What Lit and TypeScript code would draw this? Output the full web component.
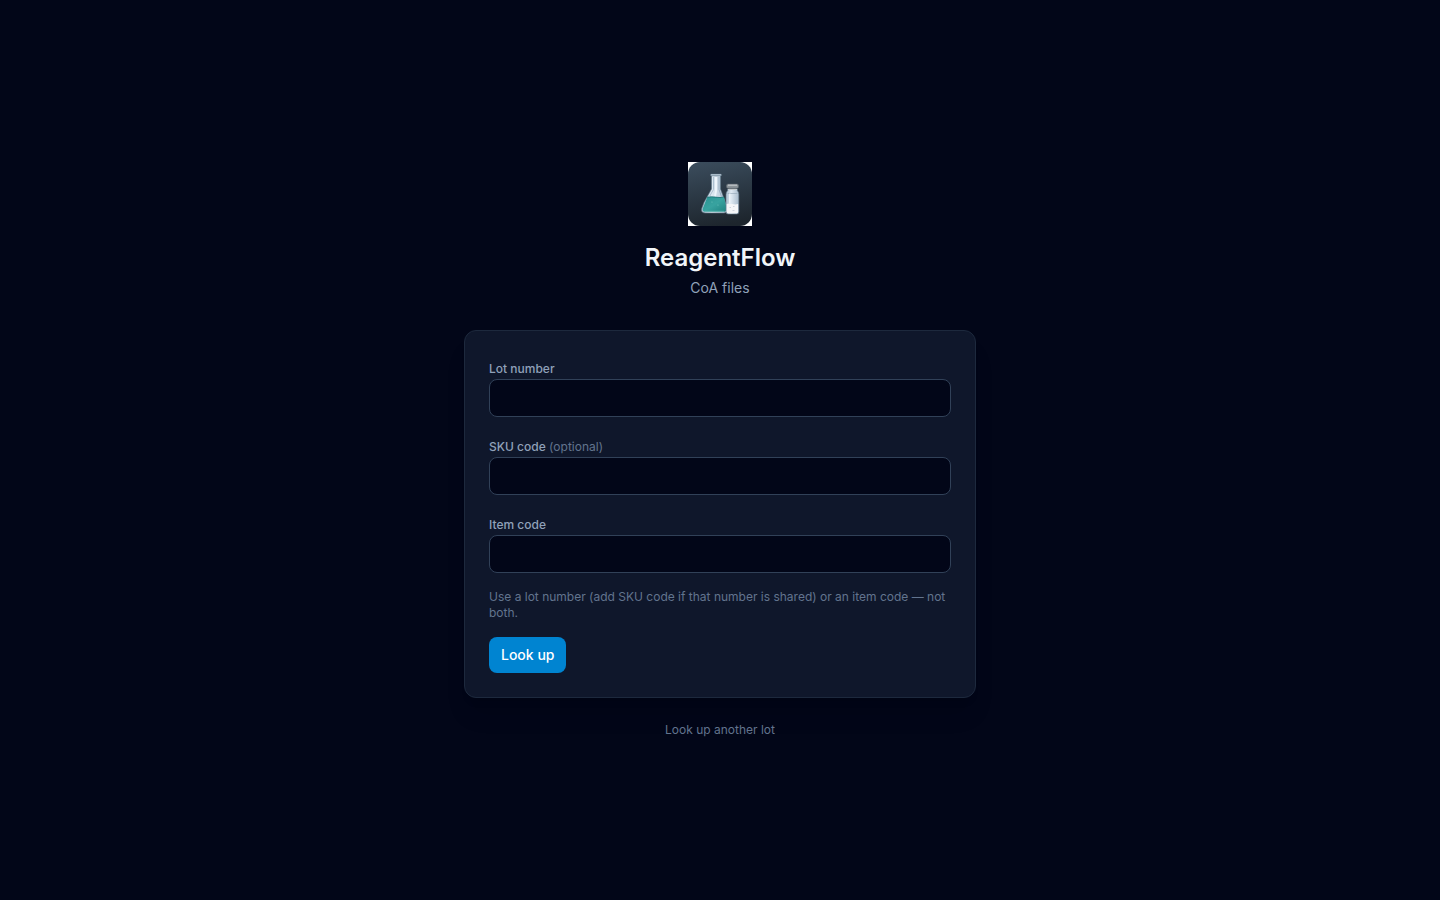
import { LitElement, html, css, svg, nothing } from "lit";
import { customElement } from "lit/decorators.js";

const logo = svg`
  <svg class="logo" viewBox="0 0 64 64" role="img" aria-label="ReagentFlow logo">
    <defs>
      <linearGradient id="tile" x1="0.3" y1="0" x2="0.5" y2="1">
        <stop offset="0" stop-color="#3a4b5b" />
        <stop offset="0.5" stop-color="#2b3844" />
        <stop offset="1" stop-color="#1d252d" />
      </linearGradient>
      <linearGradient id="glass" x1="0" y1="0" x2="1" y2="0">
        <stop offset="0" stop-color="#a9bccd" />
        <stop offset="0.4" stop-color="#dfe9f2" />
        <stop offset="1" stop-color="#a9bccd" />
      </linearGradient>
      <linearGradient id="liquid" x1="0" y1="0" x2="1" y2="1">
        <stop offset="0" stop-color="#2a9291" />
        <stop offset="0.5" stop-color="#38a3a0" />
        <stop offset="1" stop-color="#1f8381" />
      </linearGradient>
    </defs>
    <rect width="64" height="64" fill="#fff" />
    <rect width="64" height="64" rx="12" fill="url(#tile)" />
    <path d="M23.500 13.500h9v13.500l5.700 15.500 1 4q.8 4-3.200 4.500H17q-4.500-.5-3.300-4.500l2.300-6L23.500 27z" fill="url(#glass)" stroke="#5d7485" stroke-width=".6" />
    <path d="M19.300 35q4-.5 8.500 0t8.200 0l2 8 .5 3.500q.3 3-2.500 3.300H17q-3-.3-2.200-3.300z" fill="url(#liquid)" />
    <path d="M19.300 35.200q4-.8 8.500 0t8-.2" fill="none" stroke="#156f72" stroke-width=".8" />
    <path d="M17 49.300h19" stroke="#68bbb8" stroke-width=".8" />
    <path d="M25.500 15v12.500l-4 7" fill="none" stroke="#a1b6c8" stroke-width=".8" />
    <path d="M28 15v14l-1 5" fill="none" stroke="#eef5fb" stroke-width="2" />
    <path d="M31 15v12.500l2.500 7" fill="none" stroke="#8fa8bc" stroke-width=".8" />
    <circle cx="24" cy="40" r=".6" fill="#6fc2bd" />
    <circle cx="30" cy="43" r=".6" fill="#6fc2bd" />
    <rect x="22.500" y="12" width="11" height="1.800" rx=".9" fill="#c9d8e4" stroke="#526b7d" stroke-width=".5" />
    <path d="M39.700 27v1.500q-1.700 1.500-1.700 4V49.500q0 2.500 2 2.500h8.800q2 0 2-2.500v-17q0-2.500-1.500-4V27z" fill="url(#glass)" stroke="#657b8c" stroke-width=".6" />
    <path d="M38.700 42q2.500-.8 5.500 0t5.900 0V49.800q0 1.500-1.500 1.500h-8.400q-1.500 0-1.500-1.500z" fill="#f5f6f8" />
    <path d="M39.700 31.500h9.600" stroke="#8fa3b3" stroke-width=".6" />
    <path d="M41.800 31.500v10" stroke="#f2f8fd" stroke-width="1.300" />
    <path d="M41.500 45.500h1.500M45 44.500h1.500M44.500 48.500h2" stroke="#c5ccd5" stroke-width=".8" />
    <path d="M40.500 25h8v3h-8z" fill="#6c757c" />
    <rect x="38.500" y="22" width="12" height="4.300" rx="1.500" fill="#8b9398" stroke="#596269" stroke-width=".5" />
    <path d="M40 23.200h9M40 27.500h9" stroke="#cfd4d6" stroke-width=".9" />
  </svg>`;

const fields = [
  { id: "lot", label: "Lot number", optional: false },
  { id: "sku", label: "SKU code", optional: true },
  { id: "item", label: "Item code", optional: false },
];

@customElement("app-root")
export class AppRoot extends LitElement {
  static styles = css`
    :host {
      display: flex;
      flex-direction: column;
      align-items: center;
      justify-content: center;
      box-sizing: border-box;
      min-height: 100vh;
      padding: 40px 16px;
      background: #020618;
      color: #f1f5f9;
      font: 16px/24px Inter, sans-serif;
    }
    .page {
      display: flex;
      flex-direction: column;
      width: 100%;
      max-width: 512px;
    }
    .header {
      display: flex;
      flex-direction: column;
      align-items: center;
      margin-bottom: 32px;
    }
    .logo {
      width: 64px;
      height: 64px;
      margin-bottom: 16px;
    }
    .title {
      margin: 0;
      font-size: 24px;
      line-height: 32px;
      font-weight: 600;
    }
    .subtitle {
      margin: 4px 0 0;
      color: #90a1b9;
      font-size: 14px;
      line-height: 20px;
    }
    .card {
      display: flex;
      flex-direction: column;
      gap: 16px;
      padding: 24px;
      border: 1px solid #1d293d;
      border-radius: 12px;
      background: #0f172b;
      box-shadow: 0 20px 25px -5px rgb(0 0 0 / 0.1), 0 8px 10px -6px rgb(0 0 0 / 0.1);
    }
    .label {
      color: #90a1b9;
      font-size: 12px;
      line-height: 16px;
      font-weight: 500;
    }
    .optional {
      color: #62748e;
      font-weight: 400;
    }
    .input {
      display: block;
      box-sizing: border-box;
      width: 100%;
      padding: 8px 12px;
      border: 1px solid #314158;
      border-radius: 8px;
      background: #020618;
      color: inherit;
      font: 14px/20px Inter, sans-serif;
    }
    .hint {
      margin: 0;
      color: #62748e;
      font-size: 12px;
      line-height: 16px;
    }
    .submit {
      align-self: flex-start;
      padding: 8px 12px;
      border: 0;
      border-radius: 8px;
      background: #0084d1;
      color: #fff;
      font: 500 14px/20px Inter, sans-serif;
      cursor: pointer;
    }
    .again {
      align-self: center;
      margin-top: 24px;
      color: #62748e;
      font-size: 12px;
      line-height: 16px;
      text-decoration: none;
    }
  `;

  render() {
    return html`
      <main class="page">
        <header class="header">
          ${logo}
          <h1 class="title">ReagentFlow</h1>
          <p class="subtitle">CoA files</p>
        </header>
        <form class="card" @submit=${(e: Event) => e.preventDefault()}>
          ${fields.map(
            (f) => html`
              <div class="field">
                <label class="label" for=${f.id}
                  >${f.label}${f.optional ? html`<span class="optional"> (optional)</span>` : nothing}</label
                >
                <input class="input" id=${f.id} name=${f.id} type="text" autocomplete="off" />
              </div>
            `
          )}
          <p class="hint">Use a lot number (add SKU code if that number is shared) or an item code — not both.</p>
          <button class="submit" type="submit">Look up</button>
        </form>
        <a class="again" href="#">Look up another lot</a>
      </main>
    `;
  }
}
